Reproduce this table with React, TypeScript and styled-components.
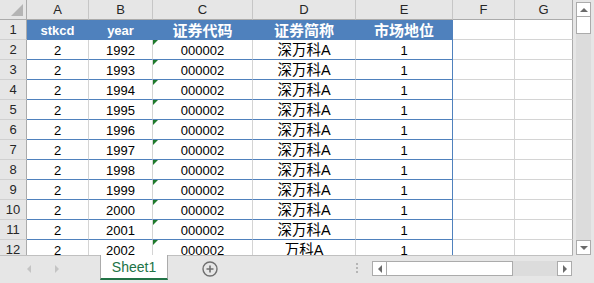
import styled, { createGlobalStyle } from 'styled-components';

const GlobalStyle = createGlobalStyle`
  html, body {
    margin: 0;
    padding: 0;
    background: #e6e6e6;
  }
  body {
    font-family: 'Liberation Sans', 'Noto Sans CJK SC', sans-serif;
  }
`;

const headBg = '#e6e6e6';
const headLine = '#ababab';
const gridLine = '#d4d4d4';
const blue = '#4f81bd';

const colWidths = [27, 62, 64, 100, 103, 97, 62, 58];
const letters = ['A', 'B', 'C', 'D', 'E', 'F', 'G'];

const Window = styled.div`
  width: 594px;
  height: 283px;
  display: flex;
  flex-direction: column;
  background: ${headBg};
  overflow: hidden;
`;

const Main = styled.div`
  display: flex;
  height: 255px;
`;

const Sheet = styled.div`
  width: 573px;
  height: 255px;
  overflow: hidden;
  display: grid;
  grid-template-columns: ${colWidths.map((w) => w + 'px').join(' ')};
  grid-auto-rows: 20px;
  background: #fff;
`;

type Kind = 'corner' | 'col' | 'row' | 'th' | 'td' | 'empty';

const Cell = styled.div<{ $kind: Kind; $edge?: boolean; $tableEnd?: boolean }>`
  position: relative;
  box-sizing: border-box;
  display: flex;
  justify-content: center;
  align-items: flex-start;
  padding-top: 2px;
  line-height: 17px;
  font-size: 13px;
  white-space: nowrap;
  overflow: hidden;
  color: #000;
  background: ${(p) =>
    p.$kind === 'corner' || p.$kind === 'col' || p.$kind === 'row'
      ? headBg
      : p.$kind === 'th'
      ? blue
      : '#fff'};
  border-right: 1px solid
    ${(p) => {
      if (p.$kind === 'corner' || p.$kind === 'row') return headLine;
      if (p.$edge) return headLine;
      if (p.$kind === 'col') return '#c6c6c6';
      if (p.$kind === 'th' || p.$tableEnd) return blue;
      return gridLine;
    }};
  border-bottom: 1px solid
    ${(p) => {
      if (p.$kind === 'corner' || p.$kind === 'col') return headLine;
      if (p.$kind === 'row') return '#d0d0d0';
      if (p.$kind === 'th' || p.$kind === 'td') return blue;
      return gridLine;
    }};
  ${(p) => (p.$kind === 'col' || p.$kind === 'row' ? 'color: #262626; padding-top: 1px;' : '')}
  ${(p) => (p.$kind === 'th' ? 'color: #fff; font-weight: bold;' : '')}
`;

const CjkHead = styled.span`
  font-size: 15px;
  line-height: 17px;
`;

const CjkText = styled.span`
  font-size: 14.5px;
  line-height: 17px;
`;

const TextFlag = styled.span`
  position: absolute;
  left: 0;
  top: 0;
  width: 0;
  height: 0;
  border-top: 5px solid #1f7a2c;
  border-right: 5px solid transparent;
`;

const CornerMark = styled.svg`
  position: absolute;
  left: 0;
  top: 0;
`;

const VScroll = styled.div`
  width: 21px;
  box-sizing: border-box;
  padding: 2px 3px 0 3px;
  display: flex;
  flex-direction: column;
`;

const ArrowBox = styled.div`
  width: 15px;
  height: 15px;
  box-sizing: border-box;
  border: 1px solid #ababab;
  background: #fff;
  display: flex;
  align-items: center;
  justify-content: center;
`;

const VThumb = styled.div`
  width: 15px;
  height: 17px;
  box-sizing: border-box;
  border: 1px solid #ababab;
  border-top: none;
  background: #fff;
`;

const VTrack = styled.div`
  flex: 1;
  background: #dcdcdc;
`;

const TabBar = styled.div`
  height: 28px;
  border-top: 1px solid #c0c0c0;
  display: flex;
  align-items: flex-start;
  width: 573px;
`;

const NavArrows = styled.div`
  width: 100px;
  height: 26px;
  display: flex;
  align-items: center;
  gap: 24px;
  padding-left: 27px;
  box-sizing: border-box;
`;

const Tab = styled.div`
  width: 68px;
  height: 25px;
  margin-top: -1px;
  box-sizing: border-box;
  background: #fff;
  border-left: 1px solid #ababab;
  border-right: 1px solid #ababab;
  border-bottom: 2px solid #217346;
  color: #217346;
  font-size: 14px;
  display: flex;
  align-items: center;
  justify-content: center;
  padding-top: 1px;
`;

const AddSheet = styled.div`
  margin-left: 34px;
  margin-top: 5px;
  width: 16px;
  height: 16px;
`;

const Splitter = styled.div`
  margin-left: 138px;
  margin-top: 7px;
  display: flex;
  flex-direction: column;
  gap: 2px;
`;

const Dot = styled.span`
  width: 2px;
  height: 2px;
  background: #b5b5b5;
`;

const HScroll = styled.div`
  margin-left: 14px;
  margin-top: 5px;
  width: 200px;
  height: 15px;
  display: flex;
`;

const HThumb = styled.div`
  width: 126px;
  height: 15px;
  box-sizing: border-box;
  border: 1px solid #ababab;
  border-left: none;
  background: #fff;
`;

const HTrack = styled.div`
  flex: 1;
  background: #dcdcdc;
`;

const Tri = ({ dir, color = '#6b6b6b', size = 4 }: { dir: 'up' | 'down' | 'left' | 'right'; color?: string; size?: number }) => {
  const pts = {
    up: `0,${size} ${size * 2},${size} ${size},0`,
    down: `0,0 ${size * 2},0 ${size},${size}`,
    left: `${size},0 ${size},${size * 2} 0,${size}`,
    right: `0,0 0,${size * 2} ${size},${size}`,
  }[dir];
  const vertical = dir === 'up' || dir === 'down';
  return (
    <svg width={vertical ? size * 2 : size} height={vertical ? size : size * 2}>
      <polygon points={pts} fill={color} />
    </svg>
  );
};

const rows = Array.from({ length: 11 }, (_, i) => ({
  stkcd: '2',
  year: String(1992 + i),
  code: '000002',
  name: i === 10 ? '万科A' : '深万科A',
  rank: '1',
}));

function App() {
  return (
    <>
      <GlobalStyle />
      <Window>
        <Main>
          <Sheet>
            <Cell $kind="corner">
              <CornerMark width="26" height="19">
                <polygon points="11,16 23,16 23,4" fill="#b4b4b4" />
              </CornerMark>
            </Cell>
            {letters.map((l) => (
              <Cell key={l} $kind="col" $edge={l === 'G'}>
                {l}
              </Cell>
            ))}

            <Cell $kind="row">1</Cell>
            <Cell $kind="th">stkcd</Cell>
            <Cell $kind="th">year</Cell>
            <Cell $kind="th">
              <CjkHead>证券代码</CjkHead>
            </Cell>
            <Cell $kind="th">
              <CjkHead>证券简称</CjkHead>
            </Cell>
            <Cell $kind="th">
              <CjkHead>市场地位</CjkHead>
            </Cell>
            <Cell $kind="empty" />
            <Cell $kind="empty" $edge />

            {rows.map((r, i) => (
              <>
                <Cell key={`r${i}`} $kind="row">
                  {i + 2}
                </Cell>
                <Cell $kind="td">{r.stkcd}</Cell>
                <Cell $kind="td">{r.year}</Cell>
                <Cell $kind="td">
                  <TextFlag />
                  {r.code}
                </Cell>
                <Cell $kind="td">
                  <CjkText>{r.name}</CjkText>
                </Cell>
                <Cell $kind="td" $tableEnd>
                  {r.rank}
                </Cell>
                <Cell $kind="empty" />
                <Cell $kind="empty" $edge />
              </>
            ))}
          </Sheet>
          <VScroll>
            <ArrowBox>
              <Tri dir="up" />
            </ArrowBox>
            <VThumb />
            <VTrack />
            <ArrowBox>
              <Tri dir="down" />
            </ArrowBox>
          </VScroll>
        </Main>
        <TabBar>
          <NavArrows>
            <Tri dir="left" color="#c4c4c4" />
            <Tri dir="right" color="#c4c4c4" />
          </NavArrows>
          <Tab>Sheet1</Tab>
          <AddSheet>
            <svg width="16" height="16" viewBox="0 0 16 16">
              <circle cx="8" cy="8" r="7" fill="none" stroke="#6f6f6f" strokeWidth="1.4" />
              <path d="M8 4.5v7M4.5 8h7" stroke="#6f6f6f" strokeWidth="1.6" />
            </svg>
          </AddSheet>
          <Splitter>
            <Dot />
            <Dot />
            <Dot />
          </Splitter>
          <HScroll>
            <ArrowBox>
              <Tri dir="left" />
            </ArrowBox>
            <HThumb />
            <HTrack />
            <ArrowBox>
              <Tri dir="right" />
            </ArrowBox>
          </HScroll>
        </TabBar>
      </Window>
    </>
  );
}

export default App;
